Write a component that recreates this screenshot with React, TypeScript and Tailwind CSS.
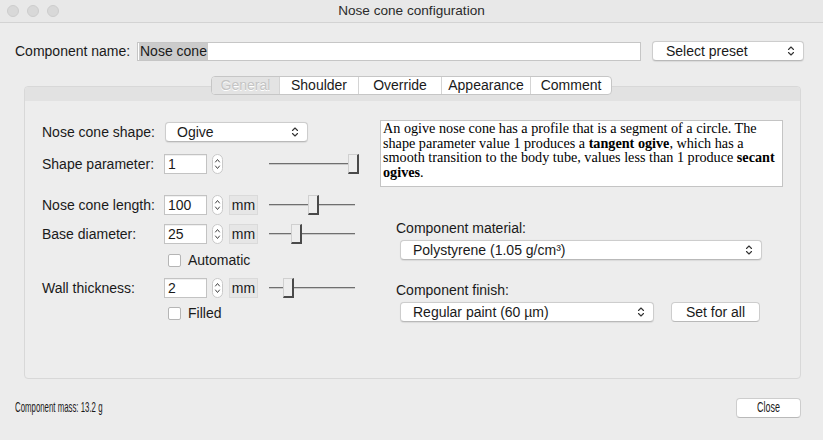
import React from "react";

function UpDown({ size = "md" }: { size?: "md" | "sm" }) {
  if (size === "sm") {
    return (
      <svg width="7" height="14" viewBox="0 0 7 14">
        <path
          d="M1.5 5 L3.5 2.5 L5.5 5 M1.5 9 L3.5 11.5 L5.5 9"
          fill="none"
          stroke="#444"
          strokeWidth="1"
          strokeLinecap="round"
          strokeLinejoin="round"
        />
      </svg>
    );
  }
  return (
    <svg width="8" height="12" viewBox="0 0 8 12">
      <path
        d="M1.5 4.5 L4 2 L6.5 4.5 M1.5 7.5 L4 10 L6.5 7.5"
        fill="none"
        stroke="#333"
        strokeWidth="1.1"
        strokeLinecap="round"
        strokeLinejoin="round"
      />
    </svg>
  );
}

function Dropdown({ label, className }: { label: React.ReactNode; className: string }) {
  return (
    <div
      className={`flex h-[20px] items-center justify-between rounded-[4px] border border-[#cdcdcd] border-b-[#b9b9b9] bg-white pr-[8px] shadow-[0_0.5px_1px_rgba(0,0,0,0.08)] ${className}`}
    >
      <span className="whitespace-nowrap">{label}</span>
      <UpDown />
    </div>
  );
}

function Field({ value }: { value: string }) {
  return (
    <div className="flex items-center">
      <div className="flex h-[20px] w-[43px] items-center border border-[#c3c3c3] bg-white pl-[3px] shadow-[inset_0_1px_0_rgba(0,0,0,0.06)]">
        {value}
      </div>
      <div className="ml-[5px] flex h-[20px] w-[11px] items-center justify-center rounded-full border border-[#c9c9c9] bg-white">
        <UpDown size="sm" />
      </div>
    </div>
  );
}

function Unit() {
  return (
    <div className="ml-[6px] flex h-[20px] w-[29px] items-center justify-center border border-[#dadada] bg-[#e6e6e6]">
      mm
    </div>
  );
}

function Slider({ width, thumb }: { width: number; thumb: number }) {
  return (
    <div className="relative h-[20px]" style={{ width }}>
      <div className="absolute left-0 right-0 top-[9px] h-[2px] border-b border-[#c8c8c8] bg-[#6f6f6f]" />
      <div
        className="absolute top-0 h-[20px] w-[11px] border-t border-l border-[#d0d0d0] border-r-2 border-b-2 border-r-[#4a4a4a] border-b-[#4a4a4a] bg-[#eeeeee]"
        style={{ left: thumb }}
      />
    </div>
  );
}

function Check({ label }: { label: string }) {
  return (
    <div className="flex h-[14px] items-center pl-[126px]">
      <div className="h-[13px] w-[13px] rounded-[2px] border border-[#b5b5b5] bg-white" />
      <span className="ml-[7px]">{label}</span>
    </div>
  );
}

const tabs = [
  { name: "General", w: "w-[67px]", off: true },
  { name: "Shoulder", w: "w-[79px]" },
  { name: "Override", w: "w-[83px]" },
  { name: "Appearance", w: "w-[89px]" },
  { name: "Comment", w: "w-[81px]" },
];

export default function App() {
  return (
    <div className="flex h-[440px] w-[823px] flex-col overflow-hidden bg-[#ececec] font-['Liberation_Sans',Arial,sans-serif] text-[14px] text-[#1a1a1a]">
      {/* title bar */}
      <div className="grid h-[23px] grid-cols-[1fr_auto_1fr] items-center border-b border-[#d3d3d3] bg-[#e8e8e8]">
        <div className="flex items-center gap-[8px] pl-[7px]">
          <div className="h-[12px] w-[12px] rounded-full border border-[#cdcdcd] bg-[#d8d8d8]" />
          <div className="h-[12px] w-[12px] rounded-full border border-[#cdcdcd] bg-[#d8d8d8]" />
          <div className="h-[12px] w-[12px] rounded-full border border-[#cdcdcd] bg-[#d8d8d8]" />
        </div>
        <div className="text-[13.6px] text-[#2b2b2b]">Nose cone configuration</div>
        <div />
      </div>

      {/* component name */}
      <div className="mt-[18px] flex h-[20px] items-center pl-[15px]">
        <span className="w-[122px]">Component name:</span>
        <div className="flex h-[19px] w-[504px] items-center border border-[#c6c6c6] bg-white pl-px">
          <span className="bg-[#cbcbcb] px-px leading-[17px]">Nose cone</span>
        </div>
        <Dropdown label="Select preset" className="ml-[11px] w-[152px] pl-[13px]" />
      </div>

      {/* tabs */}
      <div className="relative z-10 mt-[15px] flex justify-center">
        <div className="flex h-[19px] overflow-hidden rounded-[4px] border border-[#c6c6c6] bg-white">
          {tabs.map((t, i) => (
            <div
              key={t.name}
              className={`flex items-center justify-center ${t.w} ${i > 0 ? "border-l border-[#d4d4d4]" : ""} ${
                t.off ? "bg-[#e3e3e3] text-[#c4c4c4] [text-shadow:0_1px_0_#fff]" : ""
              }`}
            >
              {t.name}
            </div>
          ))}
        </div>
      </div>

      {/* tab panel */}
      <div className="-mt-[9px] ml-[24px] mr-[22px] flex h-[293px] flex-col rounded-[4px] border border-[#d8d8d8] bg-[#ededed]">
        <div className="h-[14px] rounded-t-[4px] bg-[#e2e2e2]" />
        <div className="flex pt-[19px]">
          {/* left column */}
          <div className="flex w-[355px] flex-col pl-[17px]">
            <div className="mt-[2px] flex h-[20px] items-center">
              <span className="w-[123px]">Nose cone shape:</span>
              <Dropdown label="Ogive" className="w-[143px] pl-[11px]" />
            </div>
            <div className="mt-[12px] flex h-[20px] items-center">
              <span className="w-[122px]">Shape parameter:</span>
              <Field value="1" />
              <div className="ml-[46px]">
                <Slider width={90} thumb={79} />
              </div>
            </div>
            <div className="mt-[21px] flex h-[20px] items-center">
              <span className="w-[122px]">Nose cone length:</span>
              <Field value="100" />
              <Unit />
              <div className="ml-[11px]">
                <Slider width={86} thumb={39} />
              </div>
            </div>
            <div className="mt-[9px] flex h-[20px] items-center">
              <span className="w-[122px]">Base diameter:</span>
              <Field value="25" />
              <Unit />
              <div className="ml-[11px]">
                <Slider width={86} thumb={22} />
              </div>
            </div>
            <div className="mt-[9px]">
              <Check label="Automatic" />
            </div>
            <div className="mt-[11px] flex h-[20px] items-center">
              <span className="w-[122px]">Wall thickness:</span>
              <Field value="2" />
              <Unit />
              <div className="ml-[11px]">
                <Slider width={86} thumb={14} />
              </div>
            </div>
            <div className="mt-[8px]">
              <Check label="Filled" />
            </div>
          </div>

          {/* right column */}
          <div className="flex w-[403px] flex-col">
            <div className="h-[67px] border border-[#c4c4c4] bg-white pl-[2px] font-['Liberation_Serif','Times_New_Roman',serif] text-[14.2px] leading-[14.6px] whitespace-nowrap text-black">
              An ogive nose cone has a profile that is a segment of a circle. The
              <br />
              shape parameter value 1 produces a <b>tangent ogive</b>, which has a
              <br />
              smooth transition to the body tube, values less than 1 produce <b>secant</b>
              <br />
              <b>ogives</b>.
            </div>
            <div className="ml-[16px] mt-[31px] h-[16px]">Component material:</div>
            <Dropdown label="Polystyrene (1.05 g/cm³)" className="ml-[20px] mt-[6px] w-[362px] pl-[12px]" />
            <div className="ml-[16px] mt-[20px] h-[16px]">Component finish:</div>
            <div className="ml-[20px] mt-[6px] flex items-center">
              <Dropdown label="Regular paint (60 µm)" className="w-[254px] pl-[12px]" />
              <div className="ml-[17px] flex h-[20px] w-[89px] items-center justify-center rounded-[4px] border border-[#cdcdcd] border-b-[#b9b9b9] bg-white">
                Set for all
              </div>
            </div>
          </div>
        </div>
      </div>

      {/* footer */}
      <div className="mt-[19px] flex h-[20px] items-center justify-between pl-[15px] pr-[22px]">
        <span className="inline-block origin-left scale-x-[0.54] whitespace-nowrap text-[14.5px]">
          Component mass: 13.2 g
        </span>
        <div className="flex h-[20px] w-[65px] items-center justify-center rounded-[4px] border border-[#cdcdcd] border-b-[#b9b9b9] bg-white">
          <span className="inline-block scale-x-[0.62] text-[14.5px]">Close</span>
        </div>
      </div>
    </div>
  );
}
